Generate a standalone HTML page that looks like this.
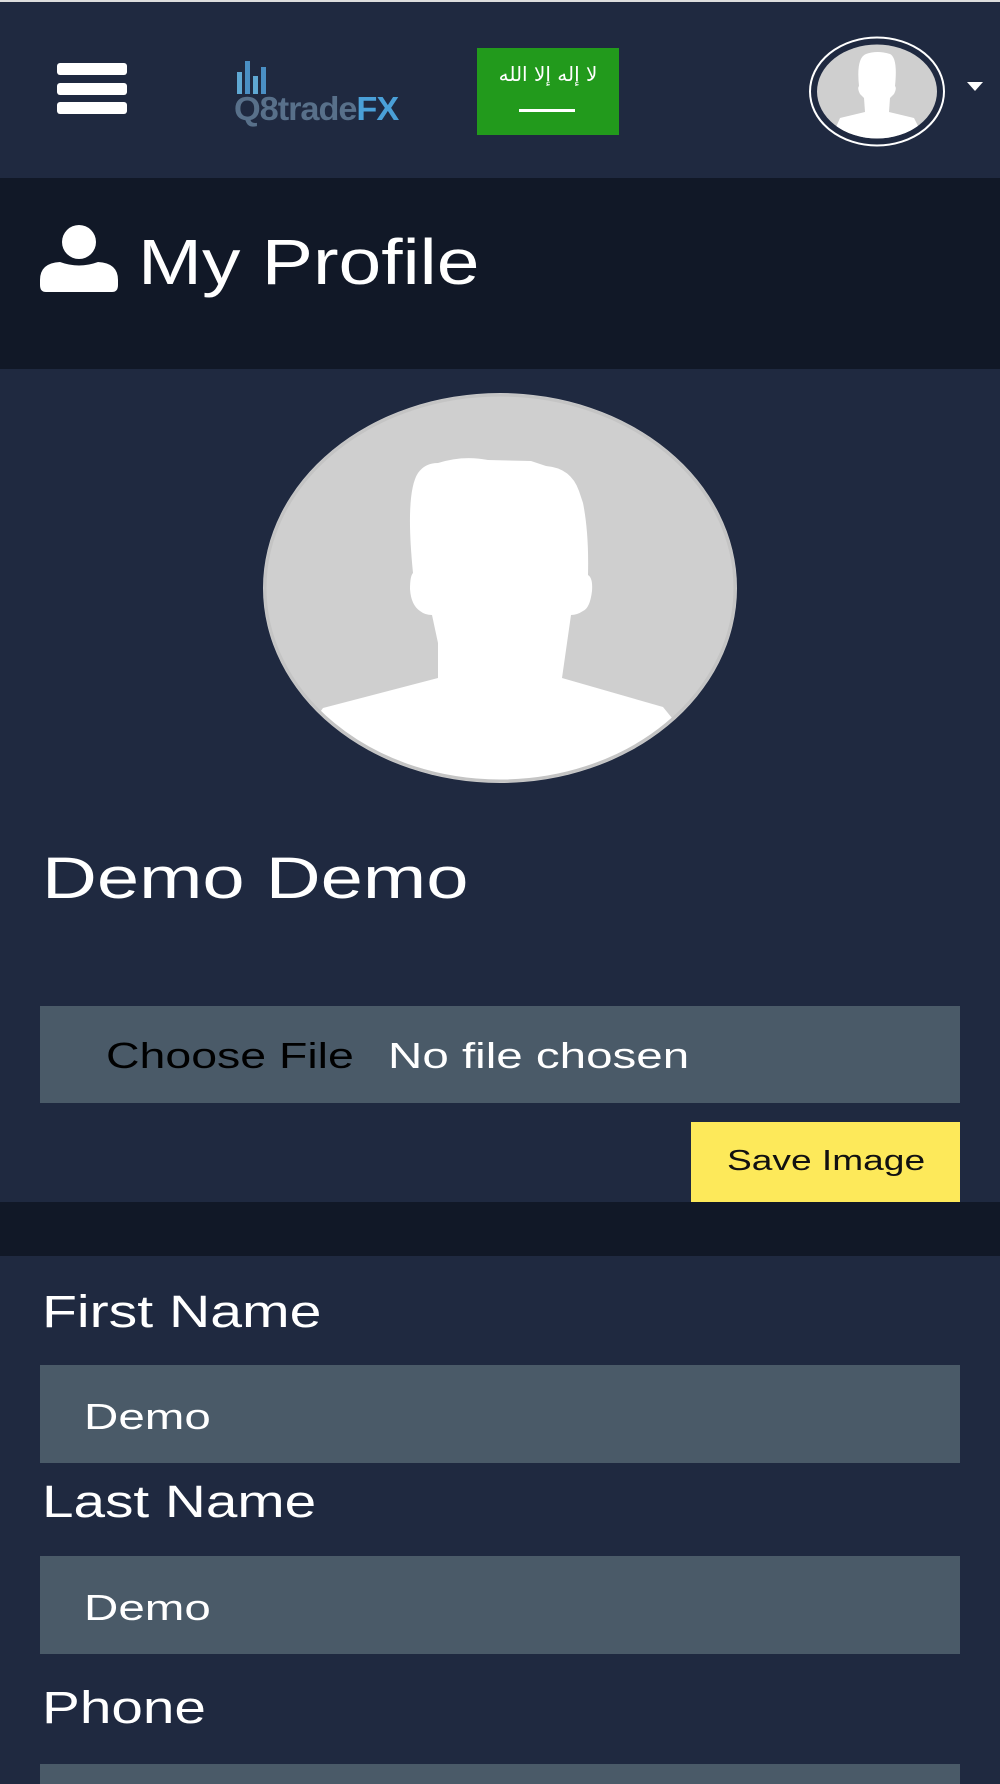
<!DOCTYPE html>
<html><head><meta charset="utf-8">
<style>
*{margin:0;padding:0;box-sizing:border-box}
body{width:1000px;height:1778px;background:#1f2940;font-family:"Liberation Sans",sans-serif;color:#fff;position:relative;overflow:hidden}
.a{position:absolute}
.t{position:absolute;white-space:nowrap;line-height:1;transform-origin:left top}
</style></head><body>
<div class="a" style="left:0;top:0;width:1000px;height:2px;background:#ddd"></div>
<!-- hamburger -->
<div class="a" style="left:57px;top:63px;width:70px;height:12px;background:#fff;border-radius:3px"></div>
<div class="a" style="left:57px;top:83px;width:70px;height:12px;background:#fff;border-radius:3px"></div>
<div class="a" style="left:57px;top:102px;width:70px;height:12px;background:#fff;border-radius:3px"></div>
<!-- logo -->
<div class="a" style="left:237px;top:72px;width:5px;height:22px;background:#5fa8d3"></div>
<div class="a" style="left:245px;top:61px;width:5px;height:33px;background:#4a8fc4"></div>
<div class="a" style="left:253px;top:76px;width:5px;height:18px;background:#5fa8d3"></div>
<div class="a" style="left:261px;top:67px;width:5px;height:27px;background:#4a8fc4"></div>
<div class="t" style="left:234px;top:92px;font-size:33px;font-weight:bold;letter-spacing:-1px;color:#58708a;transform:scaleX(1.04)">Q8trade<span style="color:#4aa0d8">FX</span></div>
<!-- flag -->
<div class="a" style="left:477px;top:48px;width:142px;height:87px;background:#229a1c;overflow:hidden">
<div style="position:absolute;left:0;top:14px;width:142px;text-align:center;font-size:20px;font-family:'DejaVu Sans',sans-serif;color:#fff;white-space:nowrap">لا إله إلا الله</div>
<div style="position:absolute;left:42px;top:61px;width:56px;height:3px;background:#fff"></div>
</div>
<!-- small avatar -->
<svg class="a" style="left:808px;top:36px" width="138" height="111" viewBox="0 0 138 111">
<defs><clipPath id="c1"><ellipse cx="69" cy="55.5" rx="60" ry="47"/></clipPath></defs>
<ellipse cx="69" cy="55.5" rx="67" ry="54" fill="none" stroke="#fff" stroke-width="2"/>
<ellipse cx="69" cy="55.5" rx="60" ry="47" fill="#cfcfcf"/>
<g clip-path="url(#c1)" fill="#fff"><path d="M51 50 Q48 22 58 18 Q69 14 82 18 Q90 22 87 50 Q89 52 86 58 L82 62 L81 76 L106 82 L120 110 L20 110 L32 82 L57 76 L56 62 L52 58 Q49 52 51 50Z"/></g>
</svg>
<div class="a" style="left:967px;top:82px;width:0;height:0;border-left:8px solid transparent;border-right:8px solid transparent;border-top:9px solid #fff"></div>
<!-- title band -->
<div class="a" style="left:0;top:178px;width:1000px;height:191px;background:#111827"></div>
<svg class="a" style="left:40px;top:225px" width="78" height="67" viewBox="0 0 78 67">
<circle cx="39" cy="17" r="17" fill="#fff"/>
<path d="M6 67 Q0 67 0 60 L0 55 Q0 38 20 37 Q39 44 58 37 Q78 38 78 55 L78 60 Q78 67 72 67Z" fill="#fff"/>
</svg>
<div class="t" style="left:138px;top:230px;font-size:64px;transform:scaleX(1.2)">My Profile</div>
<!-- big avatar -->
<svg class="a" style="left:263px;top:393px" width="474" height="390" viewBox="0 0 474 390">
<defs><clipPath id="c2"><ellipse cx="237" cy="195" rx="236" ry="194"/></clipPath></defs>
<ellipse cx="237" cy="195" rx="237" ry="195" fill="#cfcfcf"/>
<g clip-path="url(#c2)"><path fill="#fff" d="M150 180 Q142 100 155 80 Q162 70 175 70 Q200 62 225 67 L268 68 L283 73 Q308 75 316 98 L320 110 Q326 140 325 182 Q330 185 329 198 Q327 215 320 218 Q314 222 308 222 L304 250 L299 285 L400 314 L470 400 L0 400 L60 315 L175 285 L175 250 L169 222 Q162 222 157 218 Q148 212 147 196 Q147 183 150 180Z"/></g>
<ellipse cx="237" cy="195" rx="235" ry="193" fill="none" stroke="#c4c4c4" stroke-width="3"/>
</svg>
<div class="t" style="left:42px;top:850px;font-size:58px;transform:scaleX(1.31)">Demo Demo</div>
<!-- file input -->
<div class="a" style="left:40px;top:1006px;width:920px;height:97px;background:#4a5a68"></div>
<div class="t" style="left:106px;top:1038px;font-size:36px;color:#000;transform:scaleX(1.29)">Choose File</div>
<div class="t" style="left:388px;top:1038px;font-size:36px;color:#fff;transform:scaleX(1.32)">No file chosen</div>
<div class="a" style="left:691px;top:1122px;width:269px;height:80px;background:#fde95a"></div>
<div class="t" style="left:727px;top:1147px;font-size:29px;color:#111;transform:scaleX(1.28)">Save Image</div>
<div class="a" style="left:0;top:1202px;width:1000px;height:54px;background:#111827"></div>
<!-- form -->
<div class="t" style="left:42px;top:1289px;font-size:45px;transform:scaleX(1.27)">First Name</div>
<div class="a" style="left:40px;top:1365px;width:920px;height:98px;background:#4a5a68"></div>
<div class="t" style="left:84px;top:1399px;font-size:36px;transform:scaleX(1.32)">Demo</div>
<div class="t" style="left:42px;top:1479px;font-size:45px;transform:scaleX(1.26)">Last Name</div>
<div class="a" style="left:40px;top:1556px;width:920px;height:98px;background:#4a5a68"></div>
<div class="t" style="left:84px;top:1590px;font-size:36px;transform:scaleX(1.32)">Demo</div>
<div class="t" style="left:42px;top:1685px;font-size:45px;transform:scaleX(1.26)">Phone</div>
<div class="a" style="left:40px;top:1764px;width:920px;height:20px;background:#4a5a68"></div>
</body></html>
